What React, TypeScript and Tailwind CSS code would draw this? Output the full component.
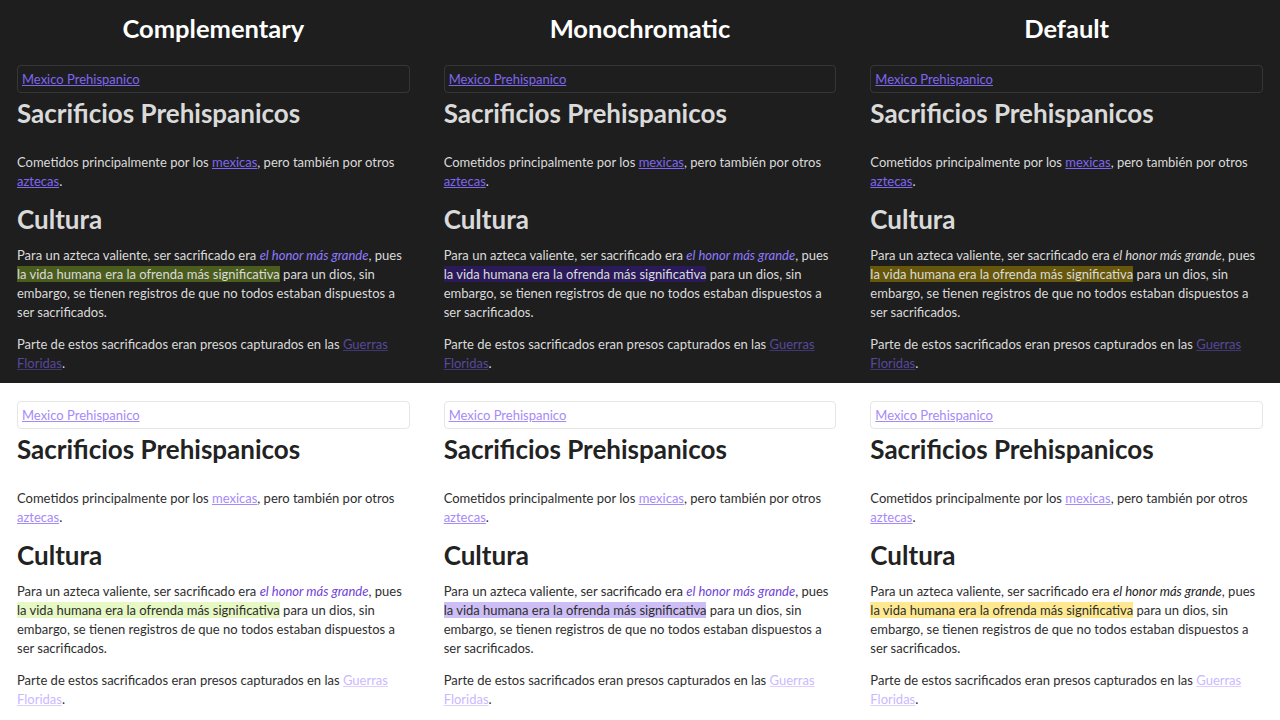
import React from "react";

type Theme = {
  name: string;
  darkEm: string;
  lightEm: string;
  darkMark: string;
  lightMark: string;
};

const themes: Theme[] = [
  {
    name: "Complementary",
    darkEm: "text-[#8f7bff]",
    lightEm: "text-[#6f42d8]",
    darkMark: "bg-[#4b5d1c]",
    lightMark: "bg-[#e6f8c3]",
  },
  {
    name: "Monochromatic",
    darkEm: "text-[#8f7bff]",
    lightEm: "text-[#6f42d8]",
    darkMark: "bg-[#2a1a5a]",
    lightMark: "bg-[#cdbff6]",
  },
  {
    name: "Default",
    darkEm: "text-[#dadada]",
    lightEm: "text-[#222222]",
    darkMark: "bg-[#66570a]",
    lightMark: "bg-[#fee990]",
  },
];

const Note: React.FC<{ theme: Theme; dark: boolean }> = ({ theme, dark }) => {
  const text = dark ? "text-[#dadada]" : "text-[#2e2e2e]";
  const heading = dark ? "text-[#dadada]" : "text-[#222222]";
  const link = dark ? "text-[#7f66f2]" : "text-[#a68af9]";
  const dimLink = dark ? "text-[#58489c] decoration-[#3f3770]" : "text-[#cbb8ff] decoration-[#ddd0ff]";
  const border = dark ? "border-[#363636]" : "border-[#e6e6e6]";
  const em = dark ? theme.darkEm : theme.lightEm;
  const mark = dark ? theme.darkMark : theme.lightMark;

  return (
    <div className={`px-[17px] pt-[18px] text-[13px] leading-[19px] whitespace-nowrap ${text}`}>
      <div className={`h-[28px] flex items-center px-[4px] border rounded-[4px] ${border}`}>
        <a className={`underline ${link}`}>Mexico Prehispanico</a>
      </div>
      <h1 className={`mt-[5px] text-[26px] leading-[31px] font-bold ${heading}`}>Sacrificios Prehispanicos</h1>
      <p className="mt-[24px]">
        Cometidos principalmente por los <a className={`underline ${link}`}>mexicas</a>, pero también por otros
        <br />
        <a className={`underline ${link}`}>aztecas</a>.
      </p>
      <h2 className={`mt-[13px] text-[26px] leading-[31px] font-bold ${heading}`}>Cultura</h2>
      <p className="mt-[11px]">
        Para un azteca valiente, ser sacrificado era <em className={em}>el honor más grande</em>, pues
        <br />
        <mark className={`${mark} ${text}`}>la vida humana era la ofrenda más significativa</mark> para un dios, sin
        <br />
        embargo, se tienen registros de que no todos estaban dispuestos a
        <br />
        ser sacrificados.
      </p>
      <p className="mt-[13px]">
        Parte de estos sacrificados eran presos capturados en las{" "}
        <a className={`underline ${dimLink}`}>Guerras</a>
        <br />
        <a className={`underline ${dimLink}`}>Floridas</a>.
      </p>
    </div>
  );
};

export default function App() {
  return (
    <div className="w-[1280px] h-[720px] overflow-hidden bg-white font-['Lato',sans-serif]">
      <div className="grid grid-cols-3 bg-[#1e1e1e] h-[383px]">
        {themes.map((t) => (
          <div key={t.name} className="flex flex-col">
            <div className="h-[47px] pt-[9px] flex items-center justify-center text-white text-[25.5px] font-bold">
              {t.name}
            </div>
            <Note theme={t} dark />
          </div>
        ))}
      </div>
      <div className="grid grid-cols-3 bg-white h-[337px]">
        {themes.map((t) => (
          <Note key={t.name} theme={t} dark={false} />
        ))}
      </div>
    </div>
  );
}
